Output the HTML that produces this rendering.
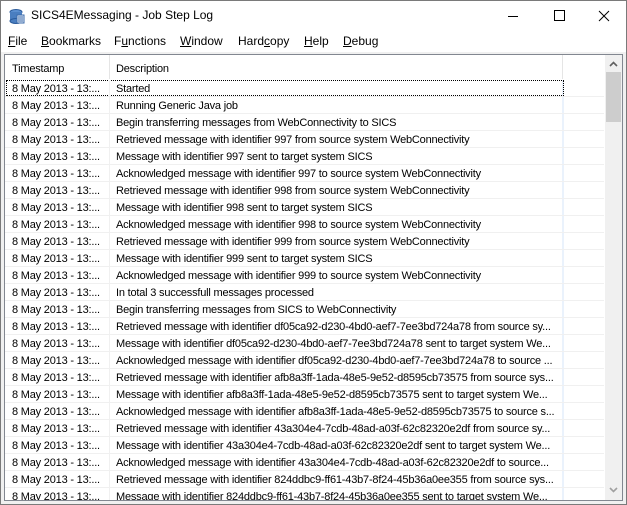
<!DOCTYPE html>
<html><head><style>
body{margin:0;width:627px;height:505px;overflow:hidden;font-family:"Liberation Sans",Arial,sans-serif;font-size:12px;color:#000;background:#f0f0f0;position:relative}
.win{position:absolute;left:0;top:0;width:625px;height:503px;border:1px solid #7a7a7a;background:#f0f0f0}
.title{position:absolute;left:0;top:0;width:625px;height:30px;background:#fff}
.title .t{position:absolute;left:30px;top:7px;font-size:12px}
.menu{position:absolute;left:0;top:30px;width:625px;height:21px;background:#fff}
.menu span{position:absolute;top:3px}
.list{position:absolute;left:4px;top:54px;width:617px;height:445px;border:1px solid #828790;background:#fff;overflow:hidden;font-size:11px;letter-spacing:-0.2px}
.hdr{position:absolute;left:0;top:0;width:600px;height:24px;background:#fff}
.hdr span{position:absolute;top:8px}
.sep{position:absolute;top:0;width:1px;height:24px;background:#e5e5e5}
.row{position:absolute;left:0;width:599px;height:16px;border-bottom:1px solid #f0f0f0}
.row .a{position:absolute;left:7px;top:3px;white-space:nowrap}
.row .b{position:absolute;left:111px;top:3px;white-space:nowrap;width:440px;overflow:hidden;text-overflow:ellipsis}
.sb{position:absolute;left:600px;top:0;width:17px;height:445px;background:#f0f0f0}
</style></head><body>
<div class="win">
<div class="title">
<svg style="position:absolute;left:8px;top:7px" width="16" height="16" viewBox="0 0 16 16"><ellipse cx="7" cy="4" rx="6" ry="2.5" fill="#5b8fd0" stroke="#2a5a9a"/><rect x="1" y="4" width="12" height="9" fill="#4a7ec0"/><ellipse cx="7" cy="13" rx="6" ry="2.5" fill="#4a7ec0" stroke="#2a5a9a"/><rect x="8" y="7" width="7" height="8" fill="#e8eef8" stroke="#3a6aaa"/><path d="M9 9h5M9 11h5M9 13h5" stroke="#3a6aaa"/></svg>
<span class="t">SICS4EMessaging - Job Step Log</span>
<svg style="position:absolute;left:505px;top:8px" width="110" height="14"><path d="M2 7.5h10" stroke="#000"/><rect x="48.5" y="1.5" width="10" height="10" fill="none" stroke="#000"/><path d="M93 2l10 10M103 2l-10 10" stroke="#000"/></svg>
</div>
<div class="menu">
<span style="left:7px"><u>F</u>ile</span>
<span style="left:40px"><u>B</u>ookmarks</span>
<span style="left:113px">F<u>u</u>nctions</span>
<span style="left:179px"><u>W</u>indow</span>
<span style="left:237px">Hard<u>c</u>opy</span>
<span style="left:303px"><u>H</u>elp</span>
<span style="left:342px"><u>D</u>ebug</span>
</div>
</div>
<div class="list">
<div class="hdr"><span style="left:7px">Timestamp</span><span style="left:111px">Description</span></div>
<div class="sep" style="left:104px"></div><div class="sep" style="left:557px"></div>
<div style="position:absolute;left:557px;top:25px;width:2px;height:420px;background:#eaf2fc"></div>
<div id="rows"></div>
<div class="sb">
<svg style="position:absolute;left:4px;top:6px" width="9" height="6"><path d="M1 5l3.5-3.5L8 5" fill="none" stroke="#606060" stroke-width="1.6"/></svg>
<div style="position:absolute;left:1px;top:17px;width:15px;height:50px;background:#cdcdcd"></div>
<svg style="position:absolute;left:4px;top:432px" width="9" height="6"><path d="M1 1l3.5 3.5L8 1" fill="none" stroke="#a0a0a0" stroke-width="1.6"/></svg>
</div>
</div>
<script>
var d=["Started","Running Generic Java job","Begin transferring messages from WebConnectivity to SICS",
"Retrieved message with identifier 997 from source system WebConnectivity","Message with identifier 997 sent to target system SICS",
"Acknowledged message with identifier 997 to source system WebConnectivity","Retrieved message with identifier 998 from source system WebConnectivity",
"Message with identifier 998 sent to target system SICS","Acknowledged message with identifier 998 to source system WebConnectivity",
"Retrieved message with identifier 999 from source system WebConnectivity","Message with identifier 999 sent to target system SICS",
"Acknowledged message with identifier 999 to source system WebConnectivity","In total 3 successfull messages processed",
"Begin transferring messages from SICS to WebConnectivity",
"Retrieved message with identifier df05ca92-d230-4bd0-aef7-7ee3bd724a78 from source sy...",
"Message with identifier df05ca92-d230-4bd0-aef7-7ee3bd724a78 sent to target system We...",
"Acknowledged message with identifier df05ca92-d230-4bd0-aef7-7ee3bd724a78 to source ...",
"Retrieved message with identifier afb8a3ff-1ada-48e5-9e52-d8595cb73575 from source sys...",
"Message with identifier afb8a3ff-1ada-48e5-9e52-d8595cb73575 sent to target system We...",
"Acknowledged message with identifier afb8a3ff-1ada-48e5-9e52-d8595cb73575 to source s...",
"Retrieved message with identifier 43a304e4-7cdb-48ad-a03f-62c82320e2df from source sy...",
"Message with identifier 43a304e4-7cdb-48ad-a03f-62c82320e2df sent to target system We...",
"Acknowledged message with identifier 43a304e4-7cdb-48ad-a03f-62c82320e2df to source...",
"Retrieved message with identifier 824ddbc9-ff61-43b7-8f24-45b36a0ee355 from source sys...",
"Message with identifier 824ddbc9-ff61-43b7-8f24-45b36a0ee355 sent to target system We..."];
var h="";for(var i=0;i<d.length;i++){h+='<div class="row" style="top:'+(25+i*17)+'px"><span class="a">8 May 2013 - 13:...</span><span class="b">'+d[i]+'</span></div>';}
h+='<div style="position:absolute;left:1px;top:25px;width:556px;height:14px;border:1px dotted #000"></div>';
h+='<div style="position:absolute;left:104px;top:25px;width:1px;height:420px;background:#f0f0f0"></div>';
document.getElementById("rows").innerHTML=h;
</script>
</body></html>
